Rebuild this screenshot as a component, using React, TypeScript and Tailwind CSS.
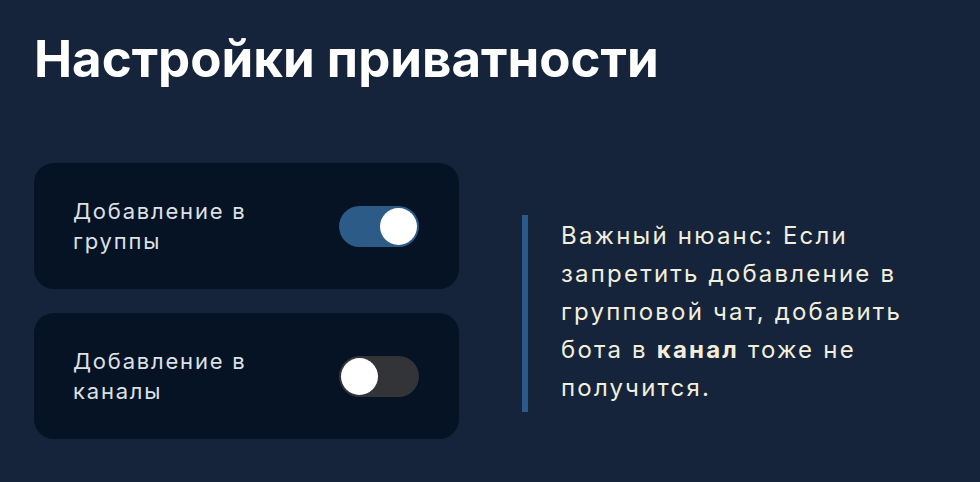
import { useState } from 'react'

function Toggle({ on, onChange }: { on: boolean; onChange: () => void }) {
  return (
    <button
      type="button"
      onClick={onChange}
      className={`relative h-[41px] w-[80px] shrink-0 rounded-full p-[2px] transition-colors ${
        on ? 'bg-[#2c5b87]' : 'bg-[#323438]'
      }`}
    >
      <span
        className={`block h-[37px] w-[37px] rounded-full bg-white transition-transform ${
          on ? 'translate-x-[39px]' : 'translate-x-0'
        }`}
      />
    </button>
  )
}

function SettingCard({ label, on, onChange }: { label: string; on: boolean; onChange: () => void }) {
  return (
    <div className="flex h-[126px] items-center justify-between rounded-[20px] bg-[#061325] pl-[39px] pr-[40px]">
      <span className="w-[200px] text-[22px] leading-[30px] tracking-[1.8px] text-[#dde1e6]">{label}</span>
      <Toggle on={on} onChange={onChange} />
    </div>
  )
}

export default function App() {
  const [groups, setGroups] = useState(true)
  const [channels, setChannels] = useState(false)

  return (
    <div className="h-[482px] w-[980px] overflow-hidden bg-[#15243b] px-[34px] pt-[27px] font-['Inter',sans-serif]">
      <h1 className="text-[51px] font-bold leading-[64px] text-white">Настройки приватности</h1>

      <div className="mt-[72px] flex items-start">
        <div className="flex w-[425px] flex-col gap-6">
          <SettingCard label="Добавление в группы" on={groups} onChange={() => setGroups(!groups)} />
          <SettingCard label="Добавление в каналы" on={channels} onChange={() => setChannels(!channels)} />
        </div>

        <div className="ml-[63px] mt-[52px] border-l-[6px] border-[#2b5a8a] pb-[5px] pl-[33px] pt-[2px]">
          <p className="w-[360px] text-[24px] leading-[38px] tracking-[2.2px] text-[#f2eedb]">
            Важный нюанс: Если запретить добавление в групповой чат, добавить бота в <b className="font-bold">канал</b> тоже не получится.
          </p>
        </div>
      </div>
    </div>
  )
}
